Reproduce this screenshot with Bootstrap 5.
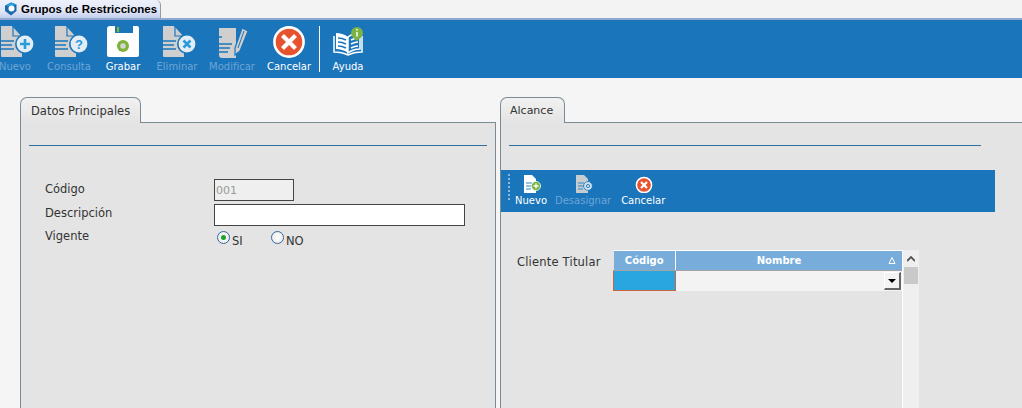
<!DOCTYPE html>
<html lang="es"><head><meta charset="utf-8"><title>Grupos de Restricciones</title>
<link rel="stylesheet" href="https://cdn.jsdelivr.net/npm/bootstrap@5.3.0/dist/css/bootstrap.min.css">
<style>
html,body{height:408px;overflow:hidden}
body{background:#f5f5f5;font-family:"DejaVu Sans",sans-serif;font-size:11.5px;color:#333;line-height:14px}
.strip{height:20px;background:#f3f3f3;border-bottom:2px solid #8ea8d2}
.doc-tab{width:161px;height:18px;background:linear-gradient(#eef1fb,#e2e7f7 60%,#c3cfee);border:1px solid #9a9a9a;border-width:0 1px 0 0;border-top-right-radius:5px;font:bold 11.5px/18px "Liberation Sans",sans-serif;color:#000;padding-left:4px;gap:4px;white-space:nowrap}
.tbar{height:58px;background:#1b75bb}
.tool{display:flex;flex-direction:column;align-items:center;width:54px;flex:none;font-size:10px;line-height:12px;color:#fff;padding-top:6px}
.tool svg{display:block;height:34px;width:54px;margin-bottom:1px}
.tool.off{color:#6ba5d6}
.tsep{width:1px;height:46px;background:#fff;margin:6px 15px 0 3px}
.work{height:330px;padding:19px 0 0 20px;gap:4px}
.pane{display:flex;flex-direction:column;min-width:0}
.pane-l{width:476px}.pane-r{flex:1}
.ptab{height:26px;margin-bottom:-1px;background:linear-gradient(#f1f1f1,#e4e4e4);border:1px solid #7b8b95;border-bottom:0;border-radius:7px 7px 0 0;padding:6px 10px 0;align-self:flex-start;position:relative;z-index:1}
.pane-r .ptab{padding:6px 11px 0 9px;font-size:11px}
.pbody{flex:1;background:#e4e4e4;border:1px solid #7b8b95;border-bottom:0}
.pane-r .pbody{border-right:0}
.rule{height:1px;background:#2f6f9f;margin:22px 8px 0}
.pane-r .rule{width:472px}
.flds{display:grid;grid-template-columns:169px 1fr;padding:33px 0 0 24px}
.flds .lab{line-height:14px;padding-top:3px}
.flds .lab2{padding-top:2px}
.flds .lab3{padding-top:0}
.flds .form-control{height:22px;border:1px solid #444;border-radius:0;padding:0 1px;font:11px "DejaVu Sans",sans-serif;margin-bottom:3px}
.in-a{width:80px}.in-b{width:251px}
.flds .form-control:disabled{background:#efefef;color:#999;opacity:1}
.rad{width:13px;height:13px;border-radius:50%;border:1px solid #35699b;background:radial-gradient(#fff,#e6e6e6);display:inline-flex;align-items:center;justify-content:center;margin-right:2px;flex:none}
.rad.on::after{content:"";width:5px;height:5px;border-radius:50%;background:#1fa12e}
.radgrp{padding:2px 0 0 3px;gap:18px}
.radopt{display:flex;align-items:flex-start;width:36px;font-size:11.5px;line-height:14px}
.radopt b{font-weight:400;padding-top:3px}
.sub{height:42px;background:#1b75bb;margin-top:24px;width:494px;padding-left:7px}
.grip{width:2px;height:28px;margin:4px 0 0 0;background:repeating-linear-gradient(#8cb9de 0 2px,transparent 2px 4px)}
.stool{display:flex;flex-direction:column;align-items:center;font-size:10px;line-height:12px;color:#fff;padding-top:5px;flex:none}
.stool svg{display:block;width:20px;height:18px;margin-bottom:2px}
.stool.off{color:#6ba5d6}
.st-a{margin-left:5px}.st-b{margin-left:8px}.st-c{margin-left:10px}
.cli{padding:38px 0 0 16px;align-items:flex-start}
.cli-lab{width:96px;padding-top:5px;flex:none;letter-spacing:.2px}
.gridx{width:289px;margin:0;border-top:1px solid #fff;flex:none;table-layout:fixed;--bs-table-bg:transparent}
.gridx th{background:#78addb;color:#fff;font:bold 10px/19px "DejaVu Sans",sans-serif;height:19px;padding:0;text-align:center;border:0;border-bottom:1px solid #a5a5a5;position:relative}
.gridx th:first-child{border-right:1px solid #fff;width:62px}
.gridx th:last-child{padding-right:20px}
.gridx td{height:20px;padding:0;border:0;background:#f3f3f3;position:relative}
.gridx td:first-child{background:#29a5e0;border:1px solid #c8663b}
.sort{position:absolute;right:6px;top:6px}
.drop{position:absolute;right:1px;top:1px;width:17px;height:18px;background:#f3f3f3;border:1px solid;border-color:#fff #666 #666 #fff;border-width:1px 2px 2px 1px;display:flex;align-items:center;justify-content:center}
.drop::after{content:"";border:4px solid transparent;border-top-color:#000;border-bottom:0}
.vbar{width:17px;height:158px;margin:0;background:#efefef;border-left:1px solid #fff;flex:none}
.vup{height:17px;display:flex;align-items:center;justify-content:center}
.vth{height:17px;background:#c9c9c9;margin:0 1px}
.mg-a{margin-left:-12px}.mg-b{margin-left:1px}.mg-c{margin-left:3px}.mg-d{margin-left:-14px}
</style></head><body>
<svg width="0" height="0" class="position-absolute">
<defs>
<symbol id="doc" viewBox="0 0 54 34"><path d="M13 0h11l10 11v20H14a1.500 1.500 0 0 1-1-1z" fill="#cfcfcf"/><path d="M25 0v10h9" fill="none" stroke="#1b75bb" stroke-width="1.2"/><path d="M12 15h14M12 19h12M12 23h14" stroke="#1b75bb" stroke-width="1.6"/><circle cx="37" cy="18" r="10" fill="#1b75bb"/><circle cx="37" cy="18" r="8.4" fill="#e3edf5"/></symbol>
</defs></svg>
<div class="strip"><div class="doc-tab d-flex align-items-center">
<svg width="13" height="14" viewBox="0 0 13 14"><path d="M1 3.500 7 .5l5.500 2v6.500L7 13.500 1 9z" fill="#1d6aa8"/><path d="M1 4 7 .5l5.500 2L9 4z" fill="#27a0d8"/><circle cx="7.500" cy="6.500" r="3" fill="#fff"/></svg>
<span>Grupos de Restricciones</span></div></div>
<div class="tbar d-flex">
<div class="tool off mg-a"><svg><use href="#doc"/><path d="M32 18h10M37 13v10" stroke="#2a9ad8" stroke-width="2.6"/></svg>Nuevo</div>
<div class="tool off"><svg><use href="#doc"/><text x="37" y="22.500" font-size="13" font-weight="700" font-family="Liberation Sans" text-anchor="middle" fill="#2a9ad8">?</text></svg>Consulta</div>
<div class="tool"><svg><path d="M14 0h5v7h18V0h4a2 2 0 0 1 2 2v27a2 2 0 0 1-2 2H13a2 2 0 0 1-2-2V3a3 3 0 0 1 3-3z" fill="#fff"/><path d="M22 1v5" stroke="#7db73a" stroke-width="2.200"/><circle cx="27" cy="20" r="6" fill="#7fb23a"/><circle cx="27" cy="20" r="2.800" fill="#d5d5d5"/></svg>Grabar</div>
<div class="tool off"><svg><use href="#doc"/><path d="M33.500 14.500l7 7M40.500 14.500l-7 7" stroke="#2a9ad8" stroke-width="2.600"/></svg>Eliminar</div>
<div class="tool off mg-b"><svg><path d="M14 2h17v30H17a3 3 0 0 1-3-3z" fill="#cfcfcf"/><path d="M14 11h3M14 18h13M14 22h11M14 26h9" stroke="#1b75bb" stroke-width="1.600"/><path d="M30 22l7-20 6 3-8 20-5 4z" fill="#cfcfcf" stroke="#1b75bb" stroke-width="1.200"/><path d="M33 22l6-17" stroke="#1b75bb"/></svg>Modificar</div>
<div class="tool mg-c"><svg><circle cx="27" cy="16" r="14.600" fill="#e8532f" stroke="#fff" stroke-width="2.600"/><path d="M20.500 9.500l13 13M33.500 9.500l-13 13" stroke="#fff" stroke-width="4.200"/></svg>Cancelar</div>
<div class="tsep"></div>
<div class="tool mg-d"><svg><path d="M15 7c4 0 8 1 12 4v16c-4-3-8-4-12-4z" fill="#fff"/><path d="M27 11c4-3 8-4 12-4v16c-4 0-8 1-12 4z" fill="none" stroke="#fff" stroke-width="1.500"/><path d="M13 10v16c5 0 10 1 14 3 4-2 9-3 14-3V10" fill="none" stroke="#fff" stroke-width="1.500"/><path d="M17 12c3 0 5 .5 8 2M17 16c3 0 5 .5 8 2M17 20c3 0 5 .5 8 2" fill="none" stroke="#1b75bb" stroke-width="1.500"/><path d="M30 14c2-1 4-2 7-2M30 18c2-1 4-2 7-2M30 22c2-1 4-2 7-2" fill="none" stroke="#fff" stroke-width="1.400"/><circle cx="36" cy="7" r="6" fill="#7cb342"/><path d="M33 12l3 3 3-3z" fill="#7cb342"/><path d="M36 6v4.500M36 3v1.400" stroke="#fff" stroke-width="1.500"/></svg>Ayuda</div>
</div>
<div class="work d-flex">
<section class="pane pane-l">
<div class="ptab">Datos Principales</div>
<div class="pbody">
<div class="rule"></div>
<div class="flds">
<div class="lab">Código</div><div><input class="form-control in-a" disabled value="001"></div>
<div class="lab lab2">Descripción</div><div><input class="form-control in-b"></div>
<div class="lab lab3">Vigente</div>
<div class="d-flex radgrp"><div class="radopt"><span class="rad on"></span><b>SI</b></div><div class="radopt"><span class="rad"></span><b>NO</b></div></div>
</div></div>
</section>
<section class="pane pane-r">
<div class="ptab">Alcance</div>
<div class="pbody">
<div class="rule"></div>
<div class="sub d-flex">
<div class="grip"></div>
<div class="stool st-a"><svg viewBox="0 0 20 18"><path d="M3 0h8l4 4v14H3z" fill="#fff"/><path d="M5 8h6M5 11h6M5 14h5" stroke="#2a86c8"/><circle cx="15" cy="11" r="4.600" fill="#7cb342" stroke="#dfe" stroke-width=".8"/><path d="M12.600 11h5M15 8.600v5" stroke="#fff" stroke-width="1.300"/></svg>Nuevo</div>
<div class="stool off st-b"><svg viewBox="0 0 20 18"><path d="M3 0h8l4 4v14H3z" fill="#c7ccd0"/><path d="M5 8h6M5 11h6M5 14h5" stroke="#2a86c8"/><circle cx="15" cy="11" r="4.400" fill="#cfe0ec" stroke="#1b75bb" stroke-width=".8"/><circle cx="15" cy="11" r="1.600" fill="none" stroke="#2a86c8"/></svg>Desasignar</div>
<div class="stool st-c"><svg viewBox="0 0 20 18"><circle cx="11" cy="10" r="7.600" fill="#e8532f" stroke="#fff" stroke-width="1.500"/><path d="M8 7l6 6M14 7l-6 6" stroke="#fff" stroke-width="2.200"/></svg>Cancelar</div>
</div>
<div class="cli d-flex">
<div class="cli-lab">Cliente Titular</div>
<table class="table gridx"><thead><tr><th>Código</th><th>Nombre<svg class="sort" width="8" height="7" viewBox="0 0 8 7"><path d="M4 .5L1 6.500h6z" fill="none" stroke="#fff"/></svg></th></tr></thead>
<tbody><tr><td></td><td><span class="drop"></span></td></tr></tbody></table>
<div class="vbar"><div class="vup"><svg width="8" height="6" viewBox="0 0 8 6"><path d="M0 5l4-4 4 4" fill="none" stroke="#555" stroke-width="1.800"/></svg></div><div class="vth"></div></div>
</div>
</div>
</section>
</div>
<script src="https://cdn.jsdelivr.net/npm/bootstrap@5.3.0/dist/js/bootstrap.bundle.min.js"></script>
</body></html>
